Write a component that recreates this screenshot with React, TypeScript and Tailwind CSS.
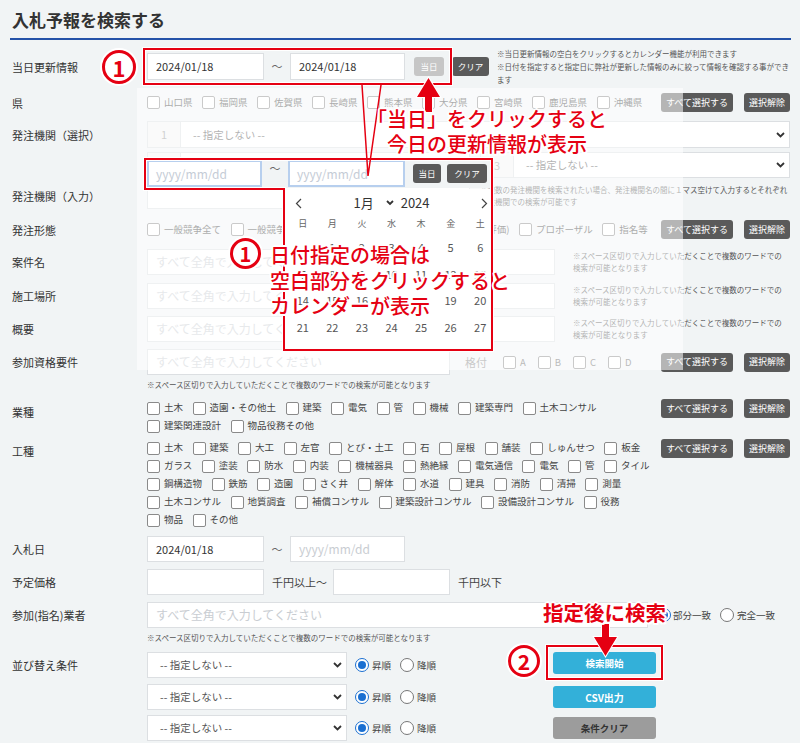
import React from "react";

const halo =
  "[text-shadow:2px_0_#fff,-2px_0_#fff,0_2px_#fff,0_-2px_#fff,1.5px_1.5px_#fff,-1.5px_-1.5px_#fff,1.5px_-1.5px_#fff,-1.5px_1.5px_#fff]";

function Cb({ label }: { label: string }) {
  return (
    <span className="flex items-center mr-[9.5px] shrink-0">
      <span className="w-[13px] h-[13px] border border-[#8a8a8a] rounded-[2px] bg-white mr-[4px] shrink-0" />
      <span className="text-[9.5px] leading-none text-[#444] whitespace-nowrap">{label}</span>
    </span>
  );
}

function Chev() {
  return (
    <svg width="9" height="6" viewBox="0 0 9 6" className="shrink-0">
      <path d="M1 1l3.5 3.5L8 1" fill="none" stroke="#333" strokeWidth="1.8" />
    </svg>
  );
}

function Sel({ cls }: { cls: string }) {
  return (
    <div className={`h-full bg-white border border-[#dcdfe2] flex items-center pl-[12px] pr-[4px] ${cls}`}>
      <span className="flex-1 text-[10.5px] text-[#555] whitespace-nowrap">-- 指定しない --</span>
      <Chev />
    </div>
  );
}

function Num({ n }: { n: string }) {
  return (
    <div className="h-full w-[33px] shrink-0 bg-[#f4f4f4] border border-[#dcdfe2] border-r-0 flex items-center justify-center text-[11px] text-[#999]">
      {n}
    </div>
  );
}

function Inp({ cls, text, ph }: { cls: string; text?: string; ph?: string }) {
  return (
    <div className={`h-full bg-white border border-[#dcdfe2] flex items-center px-[8px] shrink-0 ${cls}`}>
      {text ? (
        <span className="text-[11px] text-[#333] whitespace-nowrap">{text}</span>
      ) : (
        <span className="text-[12px] text-[#c9cdd2] whitespace-nowrap">{ph}</span>
      )}
    </div>
  );
}

function SelBtns() {
  return (
    <div className="flex gap-[11px] shrink-0 ml-auto">
      <div className="w-[72px] h-[19px] rounded-[3px] bg-[#5a5a5a] text-white text-[9px] flex items-center justify-center whitespace-nowrap">
        すべて選択する
      </div>
      <div className="w-[46px] h-[19px] rounded-[3px] bg-[#5a5a5a] text-white text-[9px] flex items-center justify-center whitespace-nowrap">
        選択解除
      </div>
    </div>
  );
}

function Radio({ on }: { on?: boolean }) {
  return on ? (
    <span className="w-[14px] h-[14px] rounded-full border-[1.5px] border-[#1a6fd1] bg-white flex items-center justify-center shrink-0">
      <span className="w-[8px] h-[8px] rounded-full bg-[#1a6fd1]" />
    </span>
  ) : (
    <span className="block w-[14px] h-[14px] rounded-full border border-[#777] bg-white shrink-0" />
  );
}

function Row({ label, cls, children }: { label?: string; cls: string; children?: React.ReactNode }) {
  return (
    <div className={`flex items-center ${cls}`}>
      <div className="w-[135px] shrink-0 text-[11px] leading-[16px] text-[#333] whitespace-nowrap">{label}</div>
      <div className="flex-1 min-w-0 h-full flex items-center">{children}</div>
    </div>
  );
}

const Tilde = () => <span className="w-[26px] shrink-0 text-center text-[11px] text-[#666]">〜</span>;

const ken = ["山口県", "福岡県", "佐賀県", "長崎県", "熊本県", "大分県", "宮崎県", "鹿児島県", "沖縄県"];
const gyo1 = ["土木", "造園・その他土", "建築", "電気", "管", "機械", "建築専門", "土木コンサル"];
const gyo2 = ["建築関連設計", "物品役務その他"];
const koshu = [
  ["土木", "建築", "大工", "左官", "とび・土工", "石", "屋根", "舗装", "しゅんせつ", "板金"],
  ["ガラス", "塗装", "防水", "内装", "機械器具", "熱絶縁", "電気通信", "電気", "管", "タイル"],
  ["鋼構造物", "鉄筋", "造園", "さく井", "解体", "水道", "建具", "消防", "清掃", "測量"],
  ["土木コンサル", "地質調査", "補償コンサル", "建築設計コンサル", "設備設計コンサル", "役務"],
  ["物品", "その他"],
];

const cal = [
  ["", "1", "2", "3", "4", "5", "6"],
  ["7", "8", "9", "10", "11", "12", "13"],
  ["14", "15", "16", "17", "18", "19", "20"],
  ["21", "22", "23", "24", "25", "26", "27"],
];

function SortRow({ label, cls, btn }: { label: string; cls: string; btn: React.ReactNode }) {
  return (
    <Row label={label} cls={cls}>
      <div className="w-[406px] h-full flex items-center shrink-0">
        <Sel cls="w-[200px]" />
        <span className="ml-[8px]">
          <Radio on />
        </span>
        <span className="ml-[3px] text-[9.5px] text-[#444]">昇順</span>
        <span className="ml-[9px]">
          <Radio />
        </span>
        <span className="ml-[3px] text-[9.5px] text-[#444]">降順</span>
      </div>
      {btn}
    </Row>
  );
}

export default function App() {
  const note = "text-[7.5px] leading-[12.5px] text-[#555] whitespace-nowrap";
  return (
    <div className="relative w-[800px] h-[743px] overflow-hidden bg-[#f1f4f5] pl-[12px] pr-[10px] font-['Noto_Sans_CJK_JP','Noto_Sans',sans-serif] text-[#333]">
      <div className="h-[38px] flex items-center pt-[2px] text-[17px] font-bold text-[#333]">入札予報を検索する</div>
      <div className="h-[2px] bg-[#2452a8] ml-[-2px] mr-[-1px]" />

      <Row label="当日更新情報" cls="mt-[13px] h-[27px]">
        <Inp cls="w-[117px]" text="2024/01/18" />
        <Tilde />
        <Inp cls="w-[115px]" text="2024/01/18" />
        <div className="ml-[9px] w-[30px] h-[19px] rounded-[3px] bg-[#c6c6c6] text-white text-[8.5px] flex items-center justify-center shrink-0">
          当日
        </div>
        <div className="ml-[8px] w-[37px] h-[19px] rounded-[3px] bg-[#5a5a5a] text-white text-[8.5px] flex items-center justify-center shrink-0">
          クリア
        </div>
        <div className={`ml-[8px] ${note} leading-[13px]`}>
          ※当日更新情報の空白をクリックするとカレンダー機能が利用できます
          <br />
          ※日付を指定すると指定日に弊社が更新した情報のみに絞って情報を確認する事ができ
          <br />
          ます
        </div>
      </Row>

      <Row label="県" cls="mt-[13px] h-[19px]">
        {ken.map((k) => (
          <Cb key={k} label={k} />
        ))}
        <SelBtns />
      </Row>

      <Row label="発注機関（選択）" cls="mt-[9px] h-[27px]">
        <Num n="1" />
        <Sel cls="flex-1" />
      </Row>

      <Row cls="mt-[4px] h-[26px]">
        <Num n="2" />
        <Sel cls="w-[290px]" />
        <div className="w-[10px]" />
        <Num n="3" />
        <Sel cls="flex-1" />
      </Row>

      <Row label="発注機関（入力）" cls="mt-[5px] h-[26px]">
        <Inp cls="w-[323px]" ph="" />
        <div className={`ml-[10px] ${note} leading-[12px]`}>
          ※複数の発注機関を検索されたい場合、発注機関名の間に１マス空けて入力するとそれぞれ
          <br />
          発注機関での検索が可能です
        </div>
      </Row>

      <Row label="発注形態" cls="mt-[11px] h-[19px]">
        <div className="w-[372px] flex items-center shrink-0">
          <Cb label="一般競争全て" />
          <Cb label="一般競争入札" />
          <span className="ml-auto flex">
            <Cb label="指名競争(総合評価)" />
          </span>
        </div>
        <Cb label="プロポーザル" />
        <Cb label="指名等" />
        <SelBtns />
      </Row>

      {["案件名", "施工場所", "概要"].map((l, i) => (
        <Row key={l} label={l} cls={i === 0 ? "mt-[10px] h-[26px]" : i === 1 ? "mt-[8px] h-[26px]" : "mt-[7px] h-[26px]"}>
          <Inp cls="w-[408px]" ph="すべて全角で入力してください" />
          <div className={`ml-[18px] ${note}`}>
            ※スペース区切りで入力していただくことで複数のワードでの
            <br />
            検索が可能となります
          </div>
        </Row>
      ))}

      <Row label="参加資格要件" cls="mt-[7px] h-[26px]">
        <Inp cls="w-[303px]" ph="すべて全角で入力してください" />
        <span className="ml-[15px] mr-[16px] text-[11px] text-[#888]">格付</span>
        {["A", "B", "C", "D"].map((a) => (
          <span key={a} className="flex items-center mr-[12px]">
            <span className="w-[13px] h-[13px] border border-[#8a8a8a] rounded-[2px] bg-white mr-[4px]" />
            <span className="text-[9.5px] text-[#666]">{a}</span>
          </span>
        ))}
        <SelBtns />
      </Row>

      <Row cls="mt-[4px] h-[12px]">
        <span className={note}>※スペース区切りで入力していただくことで複数のワードでの検索が可能となります</span>
      </Row>

      <div className="flex mt-[8px]">
        <div className="w-[135px] shrink-0 pt-[5px] text-[11px] leading-[16px]">業種</div>
        <div className="flex-1">
          <div className="h-[18px] flex items-center">
            {gyo1.map((k) => (
              <Cb key={k} label={k} />
            ))}
          </div>
          <div className="h-[18px] flex items-center">
            {gyo2.map((k) => (
              <Cb key={k} label={k} />
            ))}
          </div>
        </div>
        <SelBtns />
      </div>

      <div className="flex mt-[4px]">
        <div className="w-[135px] shrink-0 pt-[4px] text-[11px] leading-[16px]">工種</div>
        <div className="flex-1">
          {koshu.map((row, i) => (
            <div key={i} className="h-[18px] flex items-center">
              {row.map((k) => (
                <Cb key={k} label={k} />
              ))}
            </div>
          ))}
        </div>
        <SelBtns />
      </div>

      <Row label="入札日" cls="mt-[7px] h-[26px]">
        <Inp cls="w-[117px]" text="2024/01/18" />
        <Tilde />
        <Inp cls="w-[115px]" ph="yyyy/mm/dd" />
      </Row>

      <Row label="予定価格" cls="mt-[7px] h-[26px]">
        <Inp cls="w-[117px]" ph="" />
        <span className="ml-[8px] mr-[6px] text-[11px] text-[#444] whitespace-nowrap">千円以上〜</span>
        <Inp cls="w-[117px]" ph="" />
        <span className="ml-[8px] text-[11px] text-[#444] whitespace-nowrap">千円以下</span>
      </Row>

      <Row label="参加(指名)業者" cls="mt-[7px] h-[26px]">
        <Inp cls="w-[501px]" ph="すべて全角で入力してください" />
        <span className="ml-[9px]">
          <Radio on />
        </span>
        <span className="ml-[2px] text-[9.5px] text-[#444] whitespace-nowrap">部分一致</span>
        <span className="ml-[9px]">
          <Radio />
        </span>
        <span className="ml-[3px] text-[9.5px] text-[#444] whitespace-nowrap">完全一致</span>
      </Row>

      <Row cls="mt-[4px] h-[12px]">
        <span className={note}>※スペース区切りで入力していただくことで複数のワードでの検索が可能となります</span>
      </Row>

      <SortRow
        label="並び替え条件"
        cls="mt-[8px] h-[26px]"
        btn={
          <div className="w-[103px] h-[22px] rounded-[3px] bg-[#33b0d9] text-white text-[9.5px] font-bold flex items-center justify-center self-start">
            検索開始
          </div>
        }
      />
      <SortRow
        label=""
        cls="mt-[6px] h-[26px]"
        btn={
          <div className="w-[103px] h-[22px] rounded-[3px] bg-[#33b0d9] text-white text-[10px] font-bold flex items-center justify-center">
            CSV出力
          </div>
        }
      />
      <SortRow
        label=""
        cls="mt-[5px] h-[26px]"
        btn={
          <div className="w-[103px] h-[22px] rounded-[3px] bg-[#9c9c9c] text-[#333] text-[9.5px] font-bold flex items-center justify-center">
            条件クリア
          </div>
        }
      />

      {/* fade overlay */}
      <div className="absolute left-[137px] top-[88px] w-[546px] h-[282px] bg-white/55" />

      {/* inset: date inputs */}
      <div className="absolute left-[146px] top-[160px] w-[345px] h-[28px] bg-[#f1f4f5] flex items-start pl-[1px]">
        <div className="w-[115px] h-[27px] bg-white border-2 border-[#b7cfee] flex items-center px-[7px] text-[12px] text-[#c5ccd6]">
          yyyy/mm/dd
        </div>
        <Tilde />
        <div className="w-[117px] h-[27px] bg-white border-2 border-[#b7cfee] flex items-center px-[7px] text-[12px] text-[#c5ccd6]">
          yyyy/mm/dd
        </div>
        <div className="ml-[8px] mt-[4px] w-[28px] h-[19px] rounded-[3px] bg-[#5a5a5a] text-white text-[8.5px] flex items-center justify-center">
          当日
        </div>
        <div className="ml-[6px] mt-[4px] w-[40px] h-[19px] rounded-[3px] bg-[#5a5a5a] text-white text-[8.5px] flex items-center justify-center">
          クリア
        </div>
      </div>

      {/* inset: calendar */}
      <div className="absolute left-[285px] top-[189px] w-[207px] h-[161px] bg-white overflow-hidden border-l border-[#e3e3e3]">
        <div className="h-[28px] flex items-center justify-between pl-[9px] pr-[4px]">
          <svg width="7" height="11" viewBox="0 0 7 11">
            <path d="M6 1 L1.5 5.5 L6 10" stroke="#444" strokeWidth="1.2" fill="none" />
          </svg>
          <div className="flex items-center text-[13px] text-[#333]">
            <span>1月</span>
            <svg width="8" height="6" viewBox="0 0 8 6" className="ml-[12px] mr-[7px]">
              <path d="M1 1l3 3 3-3" fill="none" stroke="#333" strokeWidth="1.8" />
            </svg>
            <span>2024</span>
          </div>
          <svg width="7" height="11" viewBox="0 0 7 11">
            <path d="M1 1 L5.5 5.5 L1 10" stroke="#444" strokeWidth="1.2" fill="none" />
          </svg>
        </div>
        <div className="ml-[2px] w-[207px] grid grid-cols-7 h-[12px] items-center text-center text-[9px] text-[#666]">
          {["日", "月", "火", "水", "木", "金", "土"].map((d) => (
            <span key={d}>{d}</span>
          ))}
        </div>
        <div className="ml-[2px] w-[207px] mt-[5px]">
          {cal.map((r, i) => (
            <div key={i} className="grid grid-cols-7 h-[26.5px] items-center text-center text-[11px] text-[#555]">
              {r.map((d, j) => (
                <span key={j}>{d}</span>
              ))}
            </div>
          ))}
        </div>
      </div>

      {/* annotation lines and arrows */}
      <svg className="absolute left-0 top-0 pointer-events-none" width="800" height="743" viewBox="0 0 800 743">
        <g fill="none">
          <rect x="144" y="49" width="307" height="35" stroke="#fff" strokeWidth="4" />
          <rect x="144" y="49" width="307" height="35" stroke="#e50012" strokeWidth="2" />
          <polygon points="145,159 492,159 492,350 284,350 284,189 145,189" stroke="#fff" strokeWidth="4" />
          <polygon points="145,159 492,159 492,350 284,350 284,189 145,189" stroke="#e50012" strokeWidth="2" />
          <rect x="547" y="646" width="115" height="33" stroke="#fff" strokeWidth="4" />
          <rect x="547" y="646" width="115" height="33" stroke="#e50012" strokeWidth="2" />
          <path d="M362 85 L368 176 L381 85" stroke="#e50012" strokeWidth="1.5" />
        </g>
        <path
          d="M417 97 L428.5 78 L440 97 L432 97 L432 112 L425 112 L425 97 Z"
          fill="#e50012"
          stroke="#fff"
          strokeWidth="2"
          paintOrder="stroke"
        />
        <path
          d="M602 624 L609 624 L609 637 L617 637 L605.5 656 L594 637 L602 637 Z"
          fill="#e50012"
          stroke="#fff"
          strokeWidth="2"
          paintOrder="stroke"
        />
      </svg>

      {/* annotation texts */}
      <div className={`absolute left-[367px] top-[107px] w-[240px] text-center text-[20px] leading-[24.5px] font-medium text-[#e50012] whitespace-nowrap ${halo}`}>
        「当日」をクリックすると
        <br />
        今日の更新情報が表示
      </div>
      <div className={`absolute left-[270px] top-[242px] text-[20px] leading-[25.5px] font-medium text-[#e50012] whitespace-nowrap ${halo}`}>
        日付指定の場合は
        <br />
        空白部分をクリックすると
        <br />
        カレンダーが表示
      </div>
      <div className={`absolute left-[543px] top-[600px] text-[20.5px] leading-[24px] font-bold text-[#e50012] whitespace-nowrap ${halo}`}>
        指定後に検索
      </div>

      {/* circled numbers */}
      <div className="absolute left-[102px] top-[50px] w-[34px] h-[34px] rounded-full border-[3px] border-[#e50012] bg-white shadow-[0_0_0_2px_#fff] flex items-center justify-center text-[22px] leading-none font-bold text-[#e50012]">
        1
      </div>
      <div className="absolute left-[230px] top-[238px] w-[31px] h-[31px] rounded-full border-[3px] border-[#e50012] bg-white shadow-[0_0_0_2px_#fff] flex items-center justify-center text-[20px] leading-none font-bold text-[#e50012]">
        1
      </div>
      <div className="absolute left-[508px] top-[645px] w-[32px] h-[32px] rounded-full border-[3px] border-[#e50012] bg-white shadow-[0_0_0_2px_#fff] flex items-center justify-center text-[21px] leading-none font-bold text-[#e50012]">
        2
      </div>
    </div>
  );
}
